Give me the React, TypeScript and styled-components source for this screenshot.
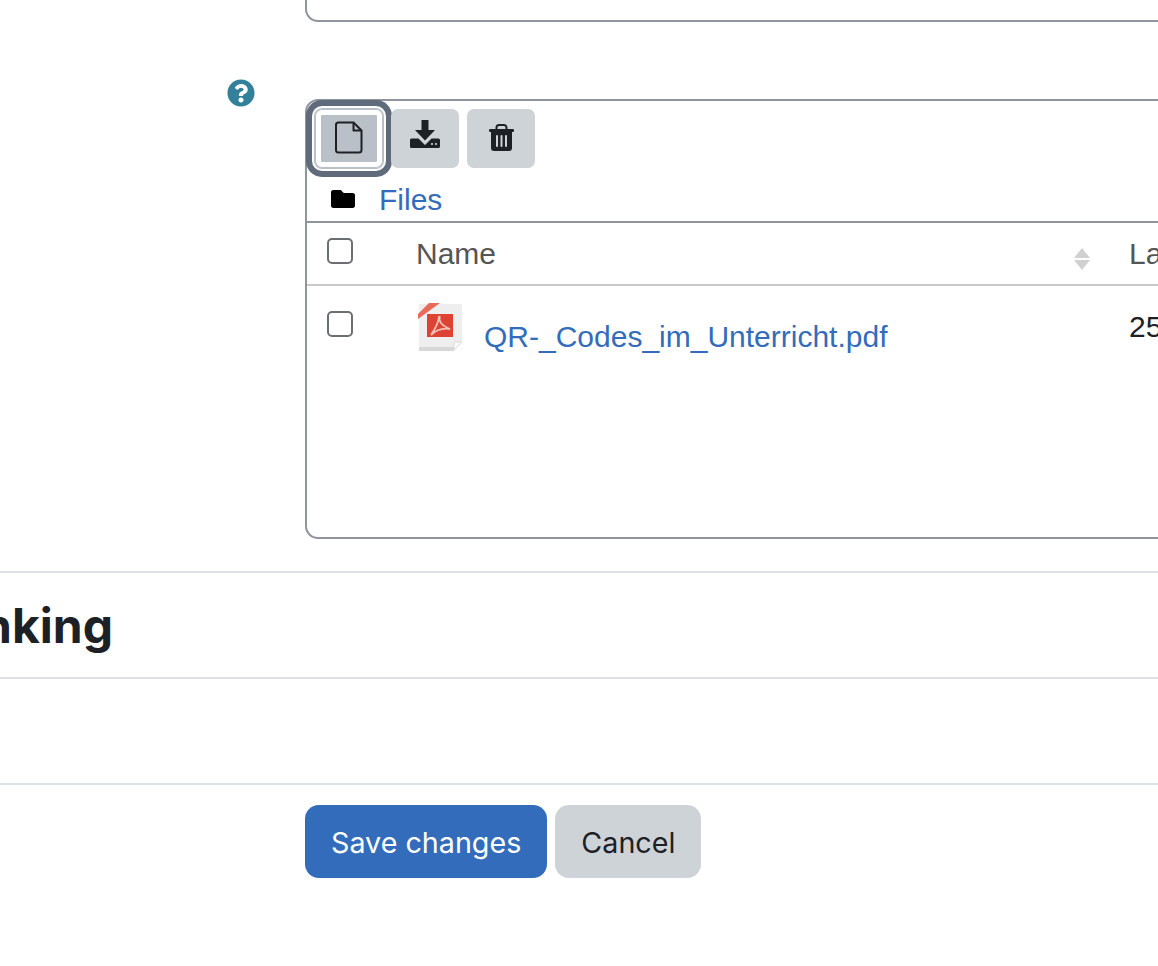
import React from "react";
import styled, { createGlobalStyle } from "styled-components";
import { FaFolder, FaQuestionCircle } from "react-icons/fa";

const Global = createGlobalStyle`
  html, body { margin: 0; padding: 0; background: #fff; }
  body { font-family: "Inter", "Liberation Sans", sans-serif; color: #1d2125; }
`;

const Page = styled.div`
  width: 1158px;
  height: 966px;
  overflow: hidden;
  background: #fff;
`;

const Indented = styled.div`
  margin-left: 305px;
`;

const ClippedBox = styled(Indented)`
  width: 1000px;
  height: 22px;
  box-sizing: border-box;
  border: 2px solid #8f949d;
  border-top: 0;
  border-radius: 0 0 13px 13px;
`;

const FormRow = styled.div`
  display: flex;
  align-items: flex-start;
  margin-top: 57px;
`;

const LabelCol = styled.div`
  flex: 0 0 305px;
  box-sizing: border-box;
  padding-right: 50px;
  display: flex;
  justify-content: flex-end;
  color: #33809a;
  line-height: 0;
`;

const Manager = styled.div`
  flex: 0 0 1000px;
  height: 440px;
  margin-top: 20px;
  box-sizing: border-box;
  border: 2px solid #8f949d;
  border-radius: 13px;
`;

const Toolbar = styled.div`
  display: flex;
  gap: 8px;
  padding: 8px;
`;

const ToolButton = styled.button<{ $focused?: boolean }>`
  width: 68px;
  height: 59px;
  padding: 0;
  border: 0;
  border-radius: 7px;
  color: #1d2125;
  display: flex;
  align-items: center;
  justify-content: center;
  background: ${(p) => (p.$focused ? "#b9c0c7" : "#ced3d8")};
  box-shadow: ${(p) =>
    p.$focused
      ? "inset 0 0 0 1px #b9c0c7, inset 0 0 0 6px #fff, 0 0 0 1px #b9c0c7, 0 0 0 3px #fff, 0 0 0 9px #5f6b7b"
      : "none"};
`;

const IconSlot = styled.span<{ $lift: number }>`
  display: block;
  line-height: 0;
  margin-bottom: ${(p) => p.$lift}px;
`;

const PathBar = styled.div`
  display: flex;
  align-items: center;
  height: 45px;
  padding-left: 24px;
  gap: 24px;
  color: #000;
`;

const LinkText = styled.a`
  font-family: "Liberation Sans", Arial, sans-serif;
  font-size: 30px;
  color: #336cbb;
  text-decoration: none;
  white-space: nowrap;
`;

const PathLink = styled(LinkText)`
  padding-top: 2px;
`;

const TableRow = styled.div<{ $head?: boolean }>`
  display: grid;
  grid-template-columns: 109px 713px 1fr;
  font-family: "Liberation Sans", Arial, sans-serif;
  font-size: 30px;
  color: ${(p) => (p.$head ? "#555" : "#1d2125")};
  border-top: 2px solid ${(p) => (p.$head ? "#8f949d" : "#c9c9c9")};
  height: ${(p) => (p.$head ? "61px" : "auto")};
`;

const CheckCell = styled.div<{ $top: number }>`
  padding: ${(p) => p.$top}px 0 0 20px;
`;

const Check = styled.span`
  display: block;
  width: 26px;
  height: 26px;
  box-sizing: border-box;
  border: 2px solid #6b6f73;
  border-radius: 5px;
  background: #fff;
`;

const NameHead = styled.div`
  display: flex;
  justify-content: space-between;
  padding: 14px 39px 0 0;
  line-height: 34px;
`;

const SortIcon = styled.svg`
  margin-top: 11px;
  flex: none;
`;

const DateCell = styled.div<{ $top: number }>`
  padding-top: ${(p) => p.$top}px;
  line-height: 34px;
  white-space: nowrap;
`;

const FileCell = styled.div`
  display: flex;
  align-items: flex-start;
  padding: 17px 0 0 2px;
  gap: 20px;
`;

const FileLink = styled(LinkText)`
  margin-top: 17px;
  line-height: 34px;
`;

const Rule = styled.div<{ $top: number }>`
  height: 2px;
  margin-top: ${(p) => p.$top}px;
  background: #dee2e6;
`;

const Heading = styled.h3`
  margin: 0;
  width: 113px;
  height: 104px;
  box-sizing: border-box;
  padding-top: 1px;
  display: flex;
  align-items: center;
  justify-content: flex-end;
  overflow: hidden;
  font-size: 48px;
  font-weight: 700;
  line-height: 1.2;
  white-space: nowrap;
  color: #1d2125;
`;

const Actions = styled(Indented)`
  display: flex;
  gap: 8px;
  margin-top: 20px;
`;

const ActionButton = styled.button<{ $primary?: boolean }>`
  height: 73px;
  padding: 2px 26px 0;
  border: 0;
  border-radius: 14px;
  font-family: "Inter", "Liberation Sans", sans-serif;
  font-size: 28.7px;
  background: ${(p) => (p.$primary ? "#336cbb" : "#ced3d8")};
  color: ${(p) => (p.$primary ? "#fff" : "#1d2125")};
`;

const FileIcon = () => (
  <svg width="28" height="33" viewBox="0 0 28 33" fill="none" stroke="#1d2125" strokeWidth="2" strokeLinejoin="round">
    <path d="M3 1.500h15.500l8 8V29a2.500 2.500 0 0 1-2.500 2.500H3.500A2.500 2.500 0 0 1 1 29V4a2.500 2.500 0 0 1 2-2.500Z" />
    <path d="M18.500 1.500V9.500h8" />
  </svg>
);

const DownloadIcon = () => (
  <svg width="30" height="28" viewBox="0 0 30 28" fill="#1d2125">
    <path d="M11.500 0h7v10h6.500L15 20.500 5 10h6.500Z" />
    <path d="M1.500 18.500H8.500L15 25l6.500-6.500h7A1.500 1.500 0 0 1 30 20v6.500a1.500 1.500 0 0 1-1.500 1.500h-27A1.500 1.500 0 0 1 0 26.500V20a1.500 1.500 0 0 1 1.500-1.500Z" />
    <circle cx="22" cy="24" r="1.100" fill="#ced3d8" />
    <circle cx="26" cy="24" r="1.100" fill="#ced3d8" />
  </svg>
);

const TrashIcon = () => (
  <svg width="25" height="27" viewBox="0 0 25 27">
    <path d="M7.500 5.500V3.500A2.500 2.500 0 0 1 10 1h5a2.500 2.500 0 0 1 2.500 2.500v2" fill="none" stroke="#1d2125" strokeWidth="2" />
    <rect x="0" y="5" width="25" height="3" rx="1.200" fill="#1d2125" />
    <path d="M2 7.500h21V24a3 3 0 0 1-3 3H5a3 3 0 0 1-3-3Z" fill="#1d2125" />
    <rect x="7" y="11" width="2" height="12" rx="1" fill="#ced3d8" />
    <rect x="11.500" y="11" width="2" height="12" rx="1" fill="#ced3d8" />
    <rect x="16" y="11" width="2" height="12" rx="1" fill="#ced3d8" />
  </svg>
);

const PdfIcon = () => (
  <svg width="46" height="48" viewBox="0 0 46 48" style={{ filter: "blur(0.7px)" }}>
    <path d="M1 1h43v38l-8 8H1Z" fill="#eeeeee" />
    <path d="M1 44h35v4H1Z" fill="#d8d8d8" />
    <path d="M36 47l8-8h-7a1 1 0 0 0-1 1Z" fill="#fafafa" stroke="#cfcfcf" strokeWidth="0.6" />
    <path d="M0 16V11L11 0h11Z" fill="#e86a5a" />
    <rect x="9" y="11" width="26" height="23" fill="#dd4232" />
    <path d="M22 13c-2 5 2 10 10 13c-7-1-13 0-19 6c4-6 8-12 8-19" fill="none" stroke="#f3c0b8" strokeWidth="1.800" />
  </svg>
);

export default function App() {
  return (
    <Page>
      <Global />
      <ClippedBox />
      <FormRow>
        <LabelCol>
          <FaQuestionCircle size={28} />
        </LabelCol>
        <Manager>
          <Toolbar>
            <ToolButton $focused aria-label="Add file">
              <IconSlot $lift={2}>
                <FileIcon />
              </IconSlot>
            </ToolButton>
            <ToolButton aria-label="Download">
              <IconSlot $lift={10}>
                <DownloadIcon />
              </IconSlot>
            </ToolButton>
            <ToolButton aria-label="Delete">
              <IconSlot $lift={2}>
                <TrashIcon />
              </IconSlot>
            </ToolButton>
          </Toolbar>
          <PathBar>
            <FaFolder size={24} />
            <PathLink href="#">Files</PathLink>
          </PathBar>
          <TableRow $head>
            <CheckCell $top={15}>
              <Check />
            </CheckCell>
            <NameHead>
              Name
              <SortIcon width="16" height="22" viewBox="0 0 16 22" fill="#d0d0d0">
                <path d="M8 0l8 10H0Z" />
                <path d="M0 12h16l-8 10Z" />
              </SortIcon>
            </NameHead>
            <DateCell $top={14}>Last modified</DateCell>
          </TableRow>
          <TableRow>
            <CheckCell $top={25}>
              <Check />
            </CheckCell>
            <FileCell>
              <PdfIcon />
              <FileLink href="#">QR-_Codes_im_Unterricht.pdf</FileLink>
            </FileCell>
            <DateCell $top={24}>25/05/23</DateCell>
          </TableRow>
        </Manager>
      </FormRow>
      <Rule $top={32} />
      <Heading>Linking</Heading>
      <Rule $top={0} />
      <Rule $top={104} />
      <Actions>
        <ActionButton $primary>Save changes</ActionButton>
        <ActionButton>Cancel</ActionButton>
      </Actions>
    </Page>
  );
}
